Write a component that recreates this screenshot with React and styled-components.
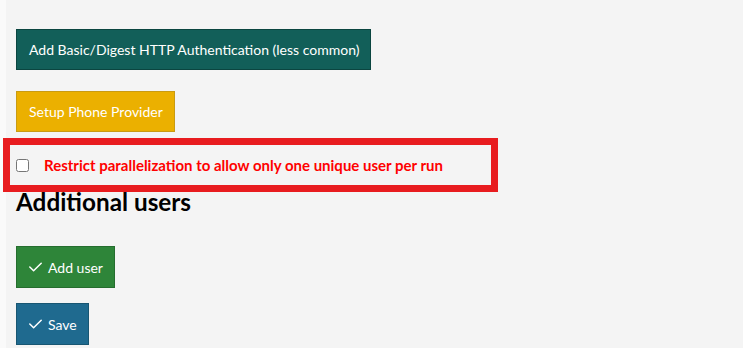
import React from "react";
import styled, { createGlobalStyle } from "styled-components";

const GlobalStyle = createGlobalStyle`
  html, body {
    margin: 0;
    padding: 0;
    background: #f4f4f4;
  }
  body {
    font-family: Lato, "Open Sans", "Liberation Sans", sans-serif;
  }
`;

const Page = styled.div`
  min-height: 348px;
  box-sizing: border-box;
  border-left: 6px solid #fafafa;
  padding: 29px 0 0 10px;
  display: flex;
  flex-direction: column;
  align-items: flex-start;
`;

const colors = {
  teal: ["#125f59", "#0b4540"],
  yellow: ["#ebb000", "#c99b12"],
  green: ["#2e8539", "#256d2e"],
  blue: ["#1f6a8f", "#185672"]
};

const Button = styled.button`
  display: inline-flex;
  align-items: center;
  gap: 6px;
  box-sizing: border-box;
  height: ${p => p.$h || 42}px;
  padding: 0 11px 0 12px;
  margin-top: ${p => p.$mt || 0}px;
  font-family: inherit;
  font-size: 14px;
  color: #fff;
  background: ${p => colors[p.$color][0]};
  border: 1px solid ${p => colors[p.$color][1]};
  border-radius: 0;
  cursor: pointer;
`;

const Highlight = styled.div`
  box-sizing: border-box;
  width: 495px;
  height: 54px;
  margin: 6px 0 0 -13px;
  border: 7px solid #e81c1f;
  display: flex;
  align-items: center;
  padding-left: 6px;
  gap: 15px;
`;

const Checkbox = styled.input`
  width: 13px;
  height: 13px;
  margin: 0;
`;

const Label = styled.label`
  font-size: 15px;
  font-weight: 700;
  color: #f00;
`;

const Heading = styled.h2`
  margin: -2px 0 0;
  font-size: 24.3px;
  line-height: 1;
  font-weight: 700;
  color: #000;
`;

const CheckIcon = () => (
  <svg width="13" height="10" viewBox="0 0 13 10" fill="none">
    <polyline
      points="0.8,5 4.6,8.8 12.2,1.2"
      stroke="#fff"
      strokeWidth="1.5"
      strokeLinecap="round"
      strokeLinejoin="round"
    />
  </svg>
);

export default function App() {
  return (
    <>
      <GlobalStyle />
      <Page>
        <Button $color="teal" $h={41}>
          Add Basic/Digest HTTP Authentication (less common)
        </Button>
        <Button $color="yellow" $h={41} $mt={21}>
          Setup Phone Provider
        </Button>
        <Highlight>
          <Checkbox type="checkbox" id="restrict" />
          <Label htmlFor="restrict">
            Restrict parallelization to allow only one unique user per run
          </Label>
        </Highlight>
        <Heading>Additional users</Heading>
        <Button $color="green" $mt={32}>
          <CheckIcon />
          Add user
        </Button>
        <Button $color="blue" $mt={15}>
          <CheckIcon />
          Save
        </Button>
      </Page>
    </>
  );
}
